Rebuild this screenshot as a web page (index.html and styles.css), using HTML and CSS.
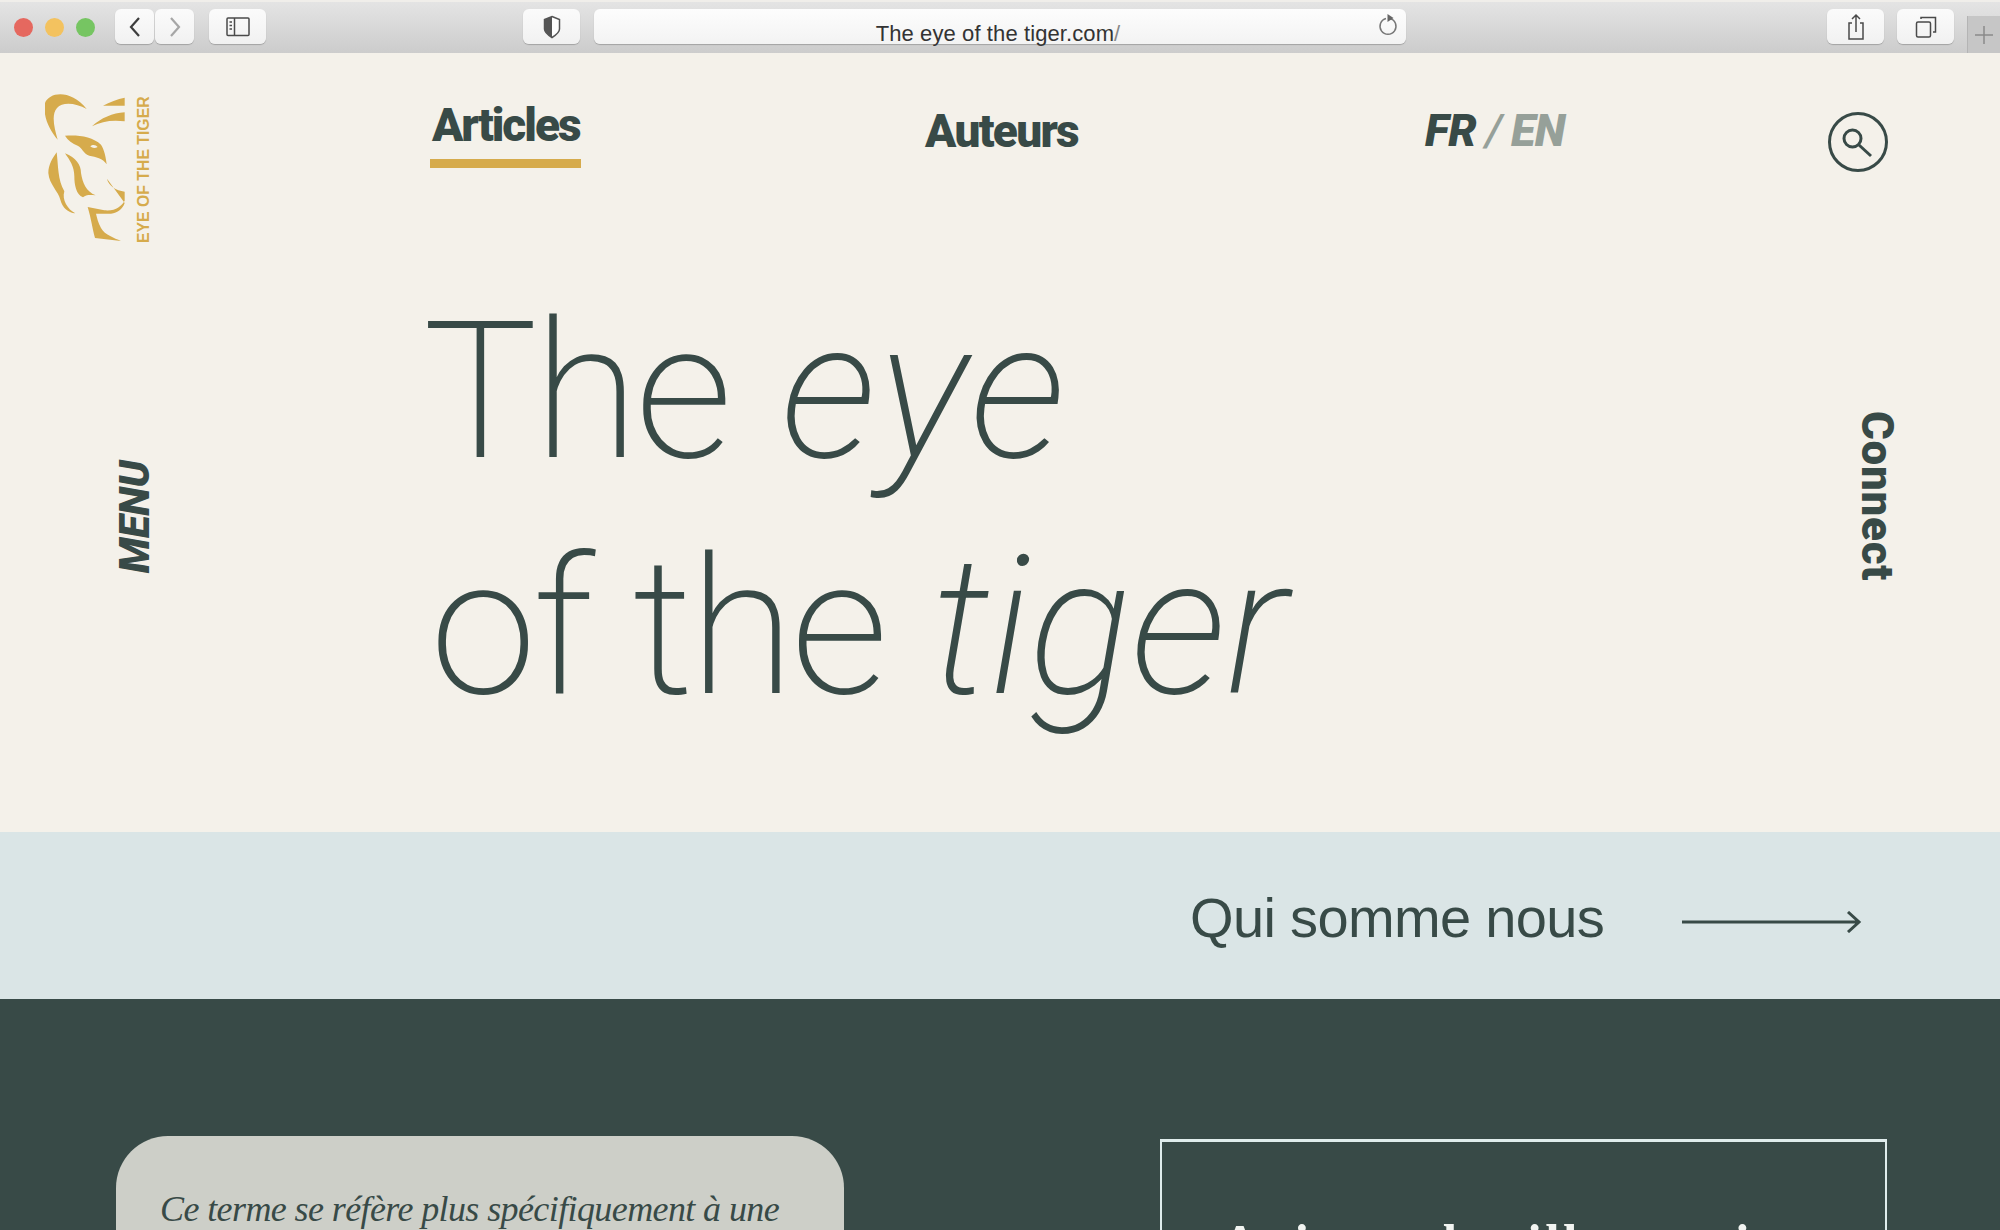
FILE: index.html
```html
<!DOCTYPE html>
<html lang="fr">
<head>
<meta charset="utf-8">
<title>The eye of the tiger</title>
<link rel="stylesheet" href="styles.css">
</head>
<body>
<div class="window">
  <header class="toolbar">
    <div class="lights"><span class="light red"></span><span class="light yellow"></span><span class="light green"></span></div>
    <div class="history">
      <button class="tb-btn nav-btn"><svg width="16" height="24" viewBox="0 0 16 24"><path d="M12 3 4 12l8 9" class="ic"/></svg></button>
      <button class="tb-btn nav-btn"><svg width="16" height="24" viewBox="0 0 16 24"><path d="M4 3l8 9-8 9" class="ic ic-off"/></svg></button>
    </div>
    <button class="tb-btn wide sidebar-btn"><svg width="24" height="20" viewBox="0 0 24 20"><rect x="1" y="1" width="22" height="17.5" rx="1" class="ic-thin"/><path d="M8.5 1v17.5" class="ic-thin"/><path d="M3.5 5h2.5M3.5 8.500h2.500M3.500 12h2.500" class="ic-thin"/></svg></button>
    <button class="tb-btn wide shield-btn"><svg width="20" height="24" viewBox="0 0 20 24"><path d="M10 1.500 17.500 4.500v9.500c0 3-3.500 6-7.500 8.500-4-2.500-7.500-5.500-7.500-8.500V4.500Z" class="shield-o"/><path d="M10 1.500V22.500c-4-2.500-7.500-5.500-7.500-8.500V4.500Z" class="shield-f"/></svg></button>
    <div class="address">
      <span class="url">The eye of the tiger.com<span class="url-end">/</span></span>
      <svg class="reload" width="20" height="24" viewBox="0 0 20 24"><path d="M8 5.500a8 8 0 1 0 4 0" class="ic-reload"/><path d="M9.500 1 15.500 5l-6 4Z" class="ic-reload-head"/></svg>
    </div>
    <button class="tb-btn wide share-btn"><svg width="20" height="28" viewBox="0 0 20 28"><path d="M6 10H3v16h14V10h-3" class="ic-thin"/><path d="M10 19V2M6 6l4-4 4 4" class="ic-thin"/></svg></button>
    <button class="tb-btn wide tabs-btn"><svg width="22" height="22" viewBox="0 0 22 22"><rect x="1.500" y="6" width="14" height="15" rx="1.500" class="ic-thin"/><path d="M6 3V1.500h14.500V16H18" class="ic-thin"/></svg></button>
    <div class="newtab"><svg width="18" height="18" viewBox="0 0 18 18"><path d="M9 0v18M0 9h18" class="ic-plus"/></svg></div>
  </header>

  <main class="page">
    <section class="hero">
      <aside class="rail-left">
        <a class="brand">
          <svg class="tiger" width="80" height="150" viewBox="72 70 240 450">
            <path d="M72 100C85 66 150 58 197 118 165 100 125 95 108 115 90 135 100 175 110 210 85 180 65 140 72 100Z"/>
            <path d="M246 108C265 98 290 88 311 84V108Z"/>
            <path d="M213 170C240 145 275 130 311 128V155C275 150 240 155 213 170Z"/>
            <path d="M132 198C170 195 215 200 240 225 250 240 255 265 257 284 245 265 225 262 205 258 185 250 185 235 170 228 155 222 140 212 132 198Z"/>
            <path class="tiger-eye" d="M208 230C214 224 224 224 230 232 222 237 214 236 208 230Z"/>
            <path d="M107 248C112 290 110 330 130 365 122 390 140 420 163 431 140 428 125 415 118 390 112 365 85 345 82 310 82 285 95 265 107 248Z"/>
            <path d="M132 251C165 265 180 285 180 310 185 340 195 365 224 377 205 375 195 375 186 383 165 375 160 345 160 320 160 290 145 270 132 251Z"/>
            <path d="M258 327C262 348 285 362 311 366V393C300 410 285 425 250 422L200 412C210 445 215 480 222 505L300 514C280 505 250 495 240 475 232 460 228 445 225 432L270 432C290 430 305 418 311 400Z"/>
          </svg>
          <span class="brand-name">EYE OF THE TIGER</span>
        </a>
        <a class="side-label menu">MENU</a>
      </aside>

      <div class="hero-main">
        <nav class="nav">
          <a class="nav-item active"><span class="nav-text">Articles</span></a>
          <a class="nav-item"><span class="nav-text">Auteurs</span></a>
          <div class="lang"><span>FR</span><span class="slash">/</span><span class="muted">EN</span></div>
        </nav>
        <h1 class="headline">
          <span class="line line-one">The <em>eye</em></span>
          <span class="line line-two">of the <em>tiger</em></span>
        </h1>
      </div>

      <aside class="rail-right">
        <button class="search"><svg width="60" height="60" viewBox="0 0 60 60"><circle cx="30" cy="30" r="28.500" class="search-ring"/><circle cx="24.500" cy="26.500" r="8.500" class="search-ic"/><path d="M31 33l12 11" class="search-ic"/></svg></button>
        <a class="side-label connect">Connect</a>
      </aside>
    </section>

    <section class="band">
      <a class="band-link">Qui somme nous</a>
      <svg class="arrow" width="180" height="22" viewBox="0 0 180 22"><path d="M0 11h177M166 1l11 10-11 10" class="arrow-path"/></svg>
    </section>

    <section class="dark">
      <article class="quote">
        <p>Ce terme se réfère plus spécifiquement à une</p>
      </article>
      <article class="boxed">
        <h2>Animer des illustrations</h2>
      </article>
    </section>
  </main>
</div>
</body>
</html>
```
FILE: styles.css
```css
* { box-sizing: border-box; }
html, body { margin: 0; padding: 0; height: 100%; overflow: hidden; background: #f4f1ea; }
a { color: inherit; text-decoration: none; display: block; }
button { border: 0; padding: 0; margin: 0; background: none; font: inherit; }
svg { display: block; }

.window { width: 2000px; height: 1230px; overflow: hidden; display: flex; flex-direction: column; }

/* browser chrome */
.toolbar {
  flex: 0 0 53px; height: 53px; margin-top: 0;
  border-top: 2px solid #f0eeea;
  background: linear-gradient(#e4e4e4, #cccccc);
  display: flex; align-items: flex-start; position: relative;
}
.lights { display: flex; gap: 12px; margin: 16px 0 0 14px; width: 101px; }
.light { width: 19px; height: 19px; border-radius: 50%; display: block; }
.red { background: #e5685f; }
.yellow { background: #f3c25f; }
.green { background: #76c562; }
.tb-btn {
  display: flex; align-items: center; justify-content: center;
  height: 35px; background: linear-gradient(#fbfbfb, #f1f1f1);
  border-radius: 6px; box-shadow: 0 1px 1px rgba(0,0,0,.22);
  margin-top: 7px;
}
.history { display: flex; gap: 1px; }
.nav-btn { width: 39px; }
.wide { width: 57px; }
.sidebar-btn { margin-left: 15px; }
.shield-btn { margin-left: 257px; }
.ic { fill: none; stroke: #3d3d3d; stroke-width: 2.200; }
.ic-off { stroke: #a6a6a6; }
.ic-thin { fill: none; stroke: #4a4a4a; stroke-width: 1.500; }
.shield-o { fill: #fff; stroke: #555; stroke-width: 1.500; }
.shield-f { fill: #555; }
.address {
  width: 812px; height: 35px; margin: 7px 0 0 14px; border-radius: 6px;
  background: linear-gradient(#fdfdfd, #f3f3f3); box-shadow: 0 1px 1px rgba(0,0,0,.22);
  position: relative; text-align: center;
}
.url { font: 22px/36px "Liberation Sans", Arial, sans-serif; letter-spacing: .1px; color: #333; display: block; padding: 7px 4px 0 0; height: 33px; overflow: visible; white-space: nowrap; }
.url-end { color: #888; }
.reload { position: absolute; right: 8px; top: 4px; }
.ic-reload { fill: none; stroke: #777; stroke-width: 1.500; }
.ic-reload-head { fill: #666; }
.share-btn { margin-left: 421px; }
.tabs-btn { margin-left: 13px; }
.newtab {
  position: absolute; right: 0; top: 14px; width: 33px; height: 37px;
  background: #c6c6c6; border-left: 1px solid #b4b4b4;
  display: flex; align-items: center; justify-content: center;
}
.ic-plus { stroke: #8a8a8a; stroke-width: 1.500; }

/* page */
.page { flex: 1; display: flex; flex-direction: column; min-height: 0; color: #384a47; }
.hero { flex: 0 0 779px; display: flex; background: #f4f1ea; }
.rail-left { width: 427px; flex: none; padding: 40px 0 0 45px; display: flex; flex-direction: column; }
.brand { display: flex; align-items: flex-start; gap: 11px; height: 152px; }
.tiger { fill: #d6ab4c; flex: none; width: 80px; height: 150px; }
.tiger-eye { fill: #f4f1ea; }
.brand-name {
  writing-mode: vertical-rl; transform: rotate(180deg);
  font: 700 15.800px/15px "Liberation Sans", Arial, sans-serif; color: #d6ab4c; white-space: nowrap;
  height: 150px; text-align: left;
}
.side-label { font-family: Roboto, "Liberation Sans", sans-serif; font-weight: 900; writing-mode: vertical-rl; white-space: nowrap; }
.menu { transform: rotate(180deg); font-size: 42px; line-height: 42px; font-style: italic; letter-spacing: -.500px; margin: 216px 0 0 69px; width: 42px; }

.hero-main { width: 1393px; flex: none; }
.nav { display: grid; grid-template-columns: 495px 500px 1fr; height: 221px; padding-top: 45px; font-family: Roboto, "Liberation Sans", sans-serif; font-weight: 900; }
.nav-item { width: 151px; font-size: 46px; line-height: 54px; margin-left: 3px; }
.nav-text { letter-spacing: -1.700px; display: block; white-space: nowrap; margin-top: 6px; }
.nav-item.active { height: 70px; position: relative; }
.nav-item.active .nav-text { margin-top: 0; padding-left: 2px; letter-spacing: -2px; }
.nav-item.active::after { content: ""; position: absolute; left: 0; right: 0; top: 61px; height: 9px; background: #d6ab4c; }
.lang { display: flex; font-size: 45px; line-height: 54px; font-style: italic; gap: 9px; margin: 6px 0 0 3px; letter-spacing: -.500px; }
.slash { font-weight: 500; color: #96a099; }
.muted { color: #96a099; }

.headline { margin: 0 0 0 -4px; font-family: Roboto, "Liberation Sans", sans-serif; font-weight: 200; font-size: 192px; line-height: 236px; letter-spacing: -4px; }
.line { display: block; white-space: nowrap; margin-top: 0; }
.line-two { padding-left: 7px; }
.headline em { font-style: italic; }
.line-one em { margin-left: 10px; letter-spacing: 4px; }
.line-two em { margin-left: 4px; letter-spacing: -.500px; }

.rail-right { flex: 1; }
.search { display: block; margin: 59px 0 0 8px; }
.search-ring, .search-ic { fill: none; stroke: #384a47; stroke-width: 3; }
.connect { font-size: 44px; line-height: 44px; letter-spacing: .700px; margin: 239px 0 0 35px; width: 44px; }

.band { flex: 0 0 167px; background: #dae5e6; display: flex; align-items: flex-start; padding-left: 1190px; }
.band-link { font: 400 56px/64px "Liberation Sans", Arial, sans-serif; letter-spacing: -.650px; margin-top: 54px; white-space: nowrap; width: 492px; }
.arrow { margin-top: 79px; }
.arrow-path { fill: none; stroke: #384a47; stroke-width: 3; }

.dark { flex: 1; background: #384a47; display: flex; align-items: flex-start; padding: 137px 0 0 116px; overflow: hidden; min-height: 0; }
.quote { width: 728px; height: 200px; flex: none; background: #cdcfc8; border-radius: 52px; padding: 53px 0 0 44px; }
.quote p { margin: 0; font: italic 400 36px/40px "Liberation Serif", "Times New Roman", serif; letter-spacing: -.600px; color: #384a47; white-space: nowrap; }
.boxed { width: 727px; height: 200px; flex: none; margin: 3px 0 0 316px; border: 2px solid #dfecec; border-top-width: 3px; padding: 72px 0 0 59px; }
.boxed h2 { margin: 0; font: 700 52px/60px "Liberation Serif", serif; color: #f1f4f1; white-space: nowrap; letter-spacing: 3.500px; }
```
